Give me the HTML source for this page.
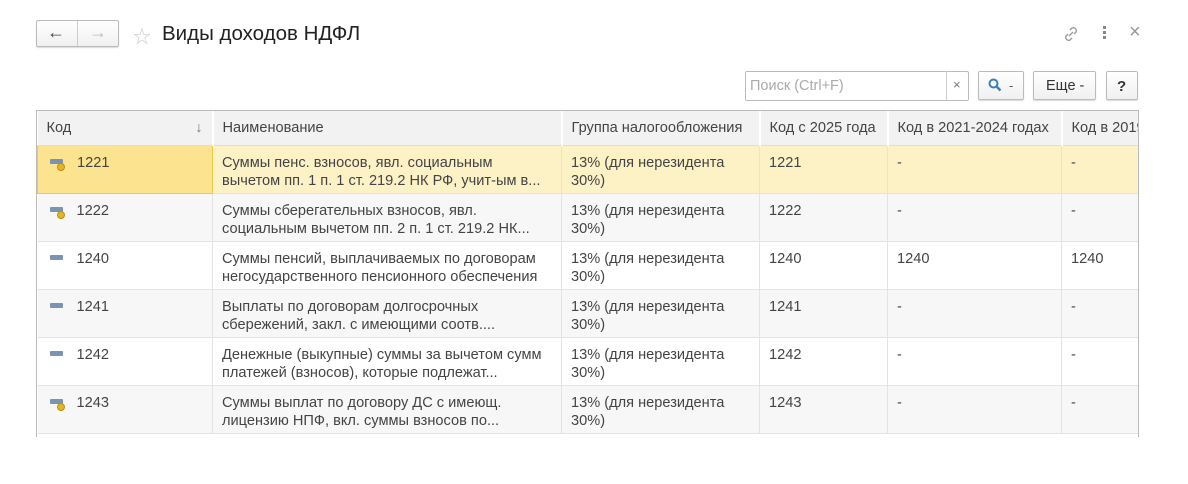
<!DOCTYPE html>
<html><head><meta charset="utf-8"><style>
*{box-sizing:border-box;margin:0;padding:0}
body{width:1188px;height:484px;background:#fff;font-family:"Liberation Sans","Noto Sans CJK SC",sans-serif;color:#333;position:relative;overflow:hidden}
.a{position:absolute}
.btn{position:absolute;border:1px solid #bbb;border-radius:2px;background:linear-gradient(#fff,#f0f0f0);box-shadow:0 1px 1px rgba(0,0,0,.15)}
table{position:absolute;left:0;top:0;width:1102px;border-collapse:collapse;table-layout:fixed;font-size:14.6px;color:#444}
td,th{border-left:1px solid #e3e3e3;vertical-align:top;overflow:hidden;white-space:nowrap}
th{height:34px;background:#f2f2f2;font-weight:normal;text-align:left;padding:9px 9px 0;color:#444;border-bottom:1px solid #ddd;border-left:2px solid #fff}
td{height:48px;padding:8px 9px 0;line-height:18px;border-bottom:1px solid #e3e3e3}
tr.g td{background:#f7f7f7}
tr.s td{background:#fdf1c6}
tr.s td.f{background:#fbe38f;border:1px solid #f0c84a}
.wrap{position:absolute;left:36px;top:110px;width:1103px;height:327px;border:1px solid #bbb;border-bottom:none;overflow:hidden}
.ic{display:inline-block;width:13px;height:5px;background:#7a93b0;border-radius:1px;margin:0 14px 2px 3px;position:relative;vertical-align:middle}
.ic.d::after{content:"";position:absolute;left:7px;top:4px;width:6px;height:6px;border-radius:50%;background:#e5b422;border:1px solid #c38e10}
</style></head><body>
<div class="btn" style="left:36px;top:20px;width:83px;height:27px"></div>
<div class="a" style="left:77px;top:21px;width:1px;height:25px;background:#ccc"></div>
<div class="a" style="left:47px;top:22px;font-size:18px;color:#444">&#8592;</div>
<div class="a" style="left:89px;top:22px;font-size:18px;color:#bbb">&#8594;</div>
<div class="a" style="left:133px;top:23px;font-size:18px;color:#ccc">&#9734;</div>
<div class="a" style="left:162px;top:22px;font-size:20.5px;color:#222">Виды доходов НДФЛ</div>
<svg class="a" style="left:1062px;top:25px" width="18" height="18" viewBox="0 0 18 18" fill="none" stroke="#999" stroke-width="1.3"><path d="M8 5l2-2a3 3 0 014 4l-2 2M10 13l-2 2a3 3 0 01-4-4l2-2M7 11l4-4"/></svg>
<div class="a" style="left:1103px;top:26px;width:3px;height:3px;background:#888;box-shadow:0 5px #888,0 10px #888"></div>
<div class="a" style="left:1129px;top:21px;font-size:20px;color:#999">×</div>
<div class="a" style="left:745px;top:71px;width:224px;height:30px;border:1px solid #bbb;border-radius:2px"></div>
<div class="a" style="left:946px;top:71px;width:1px;height:30px;background:#ccc"></div>
<div class="a" style="left:750px;top:78px;font-size:14.5px;color:#aaa">Поиск (Ctrl+F)</div>
<div class="a" style="left:953px;top:77px;font-size:13px;color:#777">×</div>
<div class="btn" style="left:978px;top:71px;width:46px;height:29px"></div>
<svg class="a" style="left:988px;top:78px" width="14" height="14" viewBox="0 0 14 14"><circle cx="5.5" cy="5.5" r="4" stroke="#3d7ebf" stroke-width="2" fill="none"/><path d="M8.5 8.5l4 4" stroke="#3d7ebf" stroke-width="2.4"/></svg>
<div class="a" style="left:1009px;top:78px;font-size:13px;color:#555">-</div>
<div class="btn" style="left:1033px;top:71px;width:63px;height:29px"></div>
<div class="a" style="left:1046px;top:78px;font-size:14.5px;color:#333">Еще -</div>
<div class="btn" style="left:1106px;top:71px;width:32px;height:29px"></div>
<div class="a" style="left:1117px;top:78px;font-size:15px;font-weight:bold;color:#333">?</div>
<div class="wrap">
<table>
<colgroup><col style="width:175px"><col style="width:349px"><col style="width:198px"><col style="width:128px"><col style="width:174px"><col style="width:78px"></colgroup>
<tr><th style="border-left:none">Код<span style="float:right;color:#777">&#8595;</span></th><th>Наименование</th><th>Группа налогообложения</th><th>Код с 2025 года</th><th>Код в 2021-2024 годах</th><th>Код в 2019</th></tr>
<tr class="s"><td class="f"><span class="ic d"></span>1221</td><td>Суммы пенс. взносов, явл. социальным<br>вычетом пп. 1 п. 1 ст. 219.2 НК РФ, учит-ым в...</td><td>13% (для нерезидента<br>30%)</td><td>1221</td><td>-</td><td>-</td></tr>
<tr class="g"><td style="border-left:none"><span class="ic d"></span>1222</td><td>Суммы сберегательных взносов, явл.<br>социальным вычетом пп. 2 п. 1 ст. 219.2 НК...</td><td>13% (для нерезидента<br>30%)</td><td>1222</td><td>-</td><td>-</td></tr>
<tr><td style="border-left:none"><span class="ic"></span>1240</td><td>Суммы пенсий, выплачиваемых по договорам<br>негосударственного пенсионного обеспечения</td><td>13% (для нерезидента<br>30%)</td><td>1240</td><td>1240</td><td>1240</td></tr>
<tr class="g"><td style="border-left:none"><span class="ic"></span>1241</td><td>Выплаты по договорам долгосрочных<br>сбережений, закл. с имеющими соотв....</td><td>13% (для нерезидента<br>30%)</td><td>1241</td><td>-</td><td>-</td></tr>
<tr><td style="border-left:none"><span class="ic"></span>1242</td><td>Денежные (выкупные) суммы за вычетом сумм<br>платежей (взносов), которые подлежат...</td><td>13% (для нерезидента<br>30%)</td><td>1242</td><td>-</td><td>-</td></tr>
<tr class="g"><td style="border-left:none"><span class="ic d"></span>1243</td><td>Суммы выплат по договору ДС с имеющ.<br>лицензию НПФ, вкл. суммы взносов по...</td><td>13% (для нерезидента<br>30%)</td><td>1243</td><td>-</td><td>-</td></tr>
</table>
</div>
</body></html>
